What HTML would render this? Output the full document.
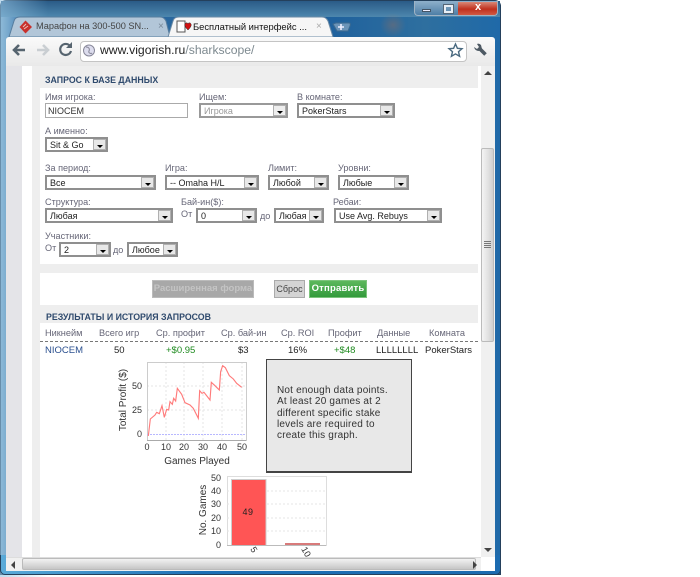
<!DOCTYPE html>
<html><head><meta charset="utf-8"><style>
html,body{margin:0;padding:0;background:#fff}
#r{position:relative;width:700px;height:577px;overflow:hidden;background:#fff;font-family:"Liberation Sans","DejaVu Sans",sans-serif;font-size:9.5px;color:#333}
#r div,#r span.a{position:absolute;box-sizing:border-box}
.l{color:#667;white-space:nowrap;font-size:9.1px;line-height:11px}
.s{background:#fff;border:2px solid #8f8f8f;height:15px;line-height:13px;padding-left:3px;color:#222;white-space:nowrap;font-size:9px;overflow:hidden}
.s i{position:absolute;right:0;top:0;width:13px;height:11px;background:#e8e8e8;border:1px solid #b0b0b0;box-sizing:border-box}
.s i:after{content:"";position:absolute;left:3px;top:5px;border:3px solid transparent;border-top:3px solid #000;border-bottom:0}
.th{color:#667;font-size:9.2px;white-space:nowrap;text-align:center;top:327px;line-height:12px}
.td{color:#222;font-size:9.5px;white-space:nowrap;text-align:center;top:345px;line-height:12px}
.h{color:#2f4a6d;font-weight:bold;font-size:8.8px;white-space:nowrap;line-height:12px}
</style></head><body><div id="r">
<div style="left:0;top:0;width:501px;height:575px;background:linear-gradient(90deg,#7da9c8 0,#2f6ea6 3%,#2a689f 35%,#1b5d9c 60%,#2e6f9f 85%,#1f69a8 100%);border-radius:6px 6px 0 0;border:1px solid #24405c"></div>
<div style="left:1px;top:1px;width:499px;height:16px;background:linear-gradient(#2a5b87,#4d87ae)"></div>
<div style="left:0;top:0;width:160px;height:577px;background:linear-gradient(90deg,rgba(150,195,225,.6),rgba(80,150,200,0) 30%)"></div>
<div style="left:380px;top:13px;width:26px;height:24px;background:radial-gradient(closest-side,rgba(190,110,70,.3),rgba(190,110,70,0))"></div>
<div style="left:0;top:555px;width:501px;height:20px;background:linear-gradient(90deg,#5aaad8,#1d6fb5 40%,#1c6bb0);border:1px solid #24405c;border-top:0;border-radius:0 0 5px 5px"></div>

<div style="left:414px;top:1px;width:84px;height:15px;border:1px solid #9fb3c4;border-top:0;border-radius:0 0 4px 4px;background:linear-gradient(#8fb0cb,#4e7ea6)"></div>
<div style="left:458px;top:2px;width:39px;height:13px;background:linear-gradient(#d98877,#c0301e 55%,#d15a44);border-radius:0 0 3px 0"></div>
<div style="left:473px;top:2px;width:10px;height:10px;color:#fff;font-size:11px;font-weight:bold;line-height:10px;text-align:center">x</div>
<div style="left:422px;top:9px;width:9px;height:3px;background:#eef;border:1px solid #456"></div>
<div style="left:444px;top:5px;width:9px;height:8px;border:2px solid #e8eef5;outline:1px solid #567"></div>

<svg style="position:absolute;left:0;top:0" width="500" height="40">
<path d="M9 37 L14 21 Q15 17 20 17 L160 17 Q164 17 166 21 L170 37Z" fill="#b2c6d8" stroke="#577d9e"/>
<path d="M168 37 L173 21 Q174 17 179 17 L322 17 Q326 17 328 21 L333 37Z" fill="#f6f6f6" stroke="#6b8aa5"/>
<path d="M333 24 L336 23 L349 23 Q351 23 350 26 L348 31 L337 31Z" fill="#6b94b8" stroke="#3d6a90"/>
<path d="M341 24v6M338 27h6" stroke="#eef" stroke-width="1.6"/>
<path d="M25.500 20.500 L32 27 L25.500 33.500 L19.500 27Z" fill="#c8302c"/>
<path d="M23 27l3-3M24 29l4-3" stroke="#eac0b8" stroke-width="1" fill="none"/>
<rect x="177" y="21" width="8" height="11" fill="#fff" stroke="#555"/>
<path d="M185 24c1-2 3-1 3 0c0-1 2-2 3 0c1 2-2 5-3 6c-1-1-4-4-3-6Z" fill="#d01010" stroke="#222" stroke-width=".5"/>
</svg>
<div class="a" style="left:36px;top:20px;font-size:9.2px;color:#444;white-space:nowrap;line-height:13px">Марафон на 300-500 SN...</div>
<div style="left:158px;top:20px;font-size:10px;color:#789;line-height:13px">×</div>
<div style="left:193px;top:20px;font-size:9.4px;color:#111;white-space:nowrap;line-height:13px">Бесплатный интерфейс ...</div>
<div style="left:316px;top:20px;font-size:10px;color:#aaa;line-height:13px">×</div>

<div style="left:6px;top:37px;width:489px;height:29px;background:linear-gradient(#fafafa,#e9e9e9);border-radius:3px 3px 0 0"></div>
<div style="left:80px;top:41px;width:387px;height:21px;background:#fff;border:1px solid #c4c4c4;border-radius:4px"></div>
<svg style="position:absolute;left:0;top:36px" width="500" height="30">
<path d="M25 14H15M19 9l-5 5 5 5" fill="none" stroke="#56646f" stroke-width="2.6"/>
<path d="M37 14h10M43 9l5 5-5 5" fill="none" stroke="#c9ced2" stroke-width="2.6"/>
<path d="M70 10a5.500 5.500 0 1 0 1 5" fill="none" stroke="#56646f" stroke-width="2.2"/>
<path d="M72 6v6h-6z" fill="#56646f"/>
<circle cx="89" cy="14.500" r="5.500" fill="#dde" stroke="#889"/>
<path d="M86 11c3 0 4 2 3 4s2 3 3 2" fill="none" stroke="#889"/>
<path d="M455.500 8l1.900 4.300 4.600.4-3.500 3 1.100 4.600-4.100-2.400-4.100 2.400 1.100-4.600-3.500-3 4.600-.4z" fill="#fff" stroke="#4a6a80" stroke-width="1.400"/>
<path d="M480 13L485.500 18.500" stroke="#4e5a64" stroke-width="3.600" fill="none"/>
<path d="M474 11 L477 13 L479 11 L477 8 Q479 7 481 9 L482 13 L479 15 Q475 15 474 11Z" fill="#4e5a64"/>
</svg>
<div style="left:100px;top:42px;font-size:12.2px;color:#222;white-space:nowrap;line-height:17px">www.vigorish.ru<span style="color:#7e8a90">/sharkscope/</span></div>

<div style="left:6px;top:66px;width:489px;height:491px;background:#fff"></div>
<div style="left:6px;top:66px;width:16px;height:491px;background:#e4e4e8"></div>
<div style="left:32px;top:66px;width:446px;height:491px;background:#eeeeee"></div>
<div style="left:40px;top:88px;width:438px;height:176px;background:#fff"></div>
<div style="left:40px;top:273px;width:438px;height:32px;background:#fff"></div>
<div style="left:40px;top:323px;width:438px;height:234px;background:#fff"></div>

<div class="h" style="left:45px;top:74px">ЗАПРОС К БАЗЕ ДАННЫХ</div>
<div class="l" style="left:45px;top:92px">Имя игрока:</div>
<div style="left:45px;top:103px;width:143px;height:15px;border:1px solid #aaa;font-size:9px;color:#333;line-height:14px;padding-left:2px">NIOCEM</div>
<div class="l" style="left:199px;top:92px">Ищем:</div>
<div class="s" style="left:199px;top:103px;width:89px;color:#999;border-color:#999">Игрока<i style="background:#eee"></i></div>
<div class="l" style="left:297px;top:92px">В комнате:</div>
<div class="s" style="left:297px;top:103px;width:98px">PokerStars<i></i></div>

<div class="l" style="left:45px;top:126px">А именно:</div>
<div class="s" style="left:45px;top:137px;width:63px">Sit &amp; Go<i></i></div>

<div class="l" style="left:45px;top:163px">За период:</div>
<div class="s" style="left:45px;top:175px;width:111px">Все<i></i></div>
<div class="l" style="left:165px;top:163px">Игра:</div>
<div class="s" style="left:165px;top:175px;width:94px">-- Omaha H/L<i></i></div>
<div class="l" style="left:268px;top:163px">Лимит:</div>
<div class="s" style="left:268px;top:175px;width:61px">Любой<i></i></div>
<div class="l" style="left:338px;top:163px">Уровни:</div>
<div class="s" style="left:338px;top:175px;width:71px">Любые<i></i></div>

<div class="l" style="left:45px;top:197px">Структура:</div>
<div class="s" style="left:45px;top:208px;width:128px">Любая<i></i></div>
<div class="l" style="left:181px;top:197px">Бай-ин($):</div>
<div class="l" style="left:181px;top:209px">От</div>
<div class="s" style="left:196px;top:208px;width:61px">0<i></i></div>
<div class="l" style="left:260px;top:211px">до</div>
<div class="s" style="left:274px;top:208px;width:50px">Любая<i></i></div>
<div class="l" style="left:333px;top:197px">Ребаи:</div>
<div class="s" style="left:334px;top:208px;width:108px">Use Avg. Rebuys<i></i></div>

<div class="l" style="left:45px;top:231px">Участники:</div>
<div class="l" style="left:45px;top:243px">От</div>
<div class="s" style="left:59px;top:242px;width:52px">2<i></i></div>
<div class="l" style="left:113px;top:245px">до</div>
<div class="s" style="left:127px;top:242px;width:51px">Любое<i></i></div>

<div style="left:152px;top:280px;width:102px;height:18px;background:#a8a8a8;border:1px solid #bbb;color:#c4c4c4;font-weight:bold;font-size:9.5px;text-align:center;line-height:16px;white-space:nowrap">Расширенная форма</div>
<div style="left:274px;top:280px;width:31px;height:18px;background:#d4d4d4;border:1px solid #aaa;color:#444;font-size:9px;text-align:center;line-height:16px">Сброс</div>
<div style="left:309px;top:280px;width:58px;height:18px;background:linear-gradient(#5cb85c,#339a3c);border:1px solid #7cc47c;color:#fff;font-weight:bold;font-size:9.5px;text-align:center;line-height:16px;white-space:nowrap;letter-spacing:.2px">Отправить</div>

<div class="h" style="left:46px;top:311px">РЕЗУЛЬТАТЫ И ИСТОРИЯ ЗАПРОСОВ</div>
<div style="left:40px;top:341px;width:438px;height:1px;border-top:1px dashed #777"></div>
<div class="th" style="left:45px">Никнейм</div>
<div class="th" style="left:99px">Всего игр</div>
<div class="th" style="left:156px">Ср. профит</div>
<div class="th" style="left:221px">Ср. бай-ин</div>
<div class="th" style="left:281px">Ср. ROI</div>
<div class="th" style="left:328px">Профит</div>
<div class="th" style="left:377px">Данные</div>
<div class="th" style="left:429px">Комната</div>
<div class="td" style="left:45px;color:#2a4f8f">NIOCEM</div>
<div class="td" style="left:114px">50</div>
<div class="td" style="left:166px;color:#1e8a1e">+$0.95</div>
<div class="td" style="left:238px">$3</div>
<div class="td" style="left:288px">16%</div>
<div class="td" style="left:334px;color:#1e8a1e">+$48</div>
<div class="td" style="left:376px">LLLLLLLL</div>
<div class="td" style="left:425px">PokerStars</div>

<svg style="position:absolute;left:0;top:0" width="500" height="577" font-family="Liberation Sans, sans-serif">
<g stroke="#e6e6e6" stroke-width="1" stroke-dasharray="2 2" fill="none">
<path d="M166 362V440M184 362V440M203 362V440M222 362V440M242 362V440M147 386H246M147 410H246"/>
</g>
<rect x="147.500" y="362.500" width="99" height="78" fill="none" stroke="#ccc"/>
<path d="M147 434.500H246" stroke="#b8b8ff" stroke-width="1" stroke-dasharray="2 1"/>
<path d="M147 440.500H246" stroke="#aaa"/>
<g transform="translate(100 355) scale(.3333)">
<polyline fill="none" stroke="#ff7a7a" stroke-width="3.400" points="145,243 151,192 165,180 170,172 178,176 186,152 193,187 200,163 206,165 210,140 217,148 221,130 227,138 232,100 245,118 255,143 270,150 280,160 295,190 299,107 306,115 312,112 330,135 334,82 345,92 358,105 362,50 368,32 376,38 388,62 400,72 410,85 425,97"/>
</g>
<g font-size="9" fill="#333" text-anchor="end">
<text x="142" y="389">50</text><text x="142" y="413">25</text><text x="142" y="437">0</text>
</g>
<g font-size="9" fill="#333" text-anchor="middle">
<text x="147" y="450">0</text><text x="166" y="450">10</text><text x="184" y="450">20</text><text x="203" y="450">30</text><text x="222" y="450">40</text><text x="242" y="450">50</text>
<text x="197" y="464" font-size="10">Games Played</text>
<text transform="translate(126 400) rotate(-90)" font-size="10">Total Profit ($)</text>
<text transform="translate(206 510) rotate(-90)" font-size="10">No. Games</text>
</g>
<rect x="227.500" y="476.500" width="99" height="69" fill="#fff" stroke="#ddd"/>
<g stroke="#e6e6e6" stroke-dasharray="2 2"><path d="M227 491H326M227 504H326M227 518H326M227 531H326"/></g>
<rect x="231.500" y="479.500" width="34.500" height="66" fill="#ff5555" stroke="#ccc"/>
<rect x="285" y="543" width="35" height="2" fill="#d87a7a"/>
<path d="M227 545.500H326" stroke="#bbb"/>
<text x="248" y="515" font-size="9" fill="#222" text-anchor="middle" letter-spacing=".5">49</text>
<g font-size="9" fill="#333" text-anchor="end">
<text x="221" y="481">50</text><text x="221" y="494">40</text><text x="221" y="507">30</text><text x="221" y="521">20</text><text x="221" y="534">10</text><text x="221" y="548">0</text>
</g>
<text transform="translate(250 549) rotate(60)" font-size="9" fill="#333">5</text>
<text transform="translate(301 549) rotate(60)" font-size="9" fill="#333">10</text>
</svg>

<div style="left:266px;top:359px;width:146px;height:114px;background:#e8e8e8;border:1px solid #444;border-bottom-width:2px"></div>
<div style="left:277px;top:385px;font-size:10px;line-height:11.3px;color:#333;white-space:nowrap;letter-spacing:.2px">Not enough data points.<br>At least 20 games at 2<br>different specific stake<br>levels are required to<br>create this graph.</div>

<div style="left:478px;top:66px;width:3px;height:491px;background:#fff"></div>
<div style="left:481px;top:66px;width:14px;height:491px;background:#f0f0f0"></div>
<div style="left:481px;top:148px;width:13px;height:194px;background:linear-gradient(90deg,#f4f4f4,#e0e0e0 60%,#cfcfcf);border:1px solid #bbb;border-radius:2px"></div>
<div style="left:484px;top:241px;width:7px;height:7px;background:repeating-linear-gradient(#777 0 1px,transparent 1px 2px)"></div>
<div style="left:484px;top:71px;width:0;height:0;border:4px solid transparent;border-bottom:4px solid #444;border-top:0"></div>
<div style="left:484px;top:548px;width:0;height:0;border:4px solid transparent;border-top:4px solid #444;border-bottom:0"></div>

<div style="left:6px;top:557px;width:475px;height:14px;background:#f0f0f0;border-top:1px solid #ddd"></div>
<div style="left:22px;top:558px;width:454px;height:12px;background:linear-gradient(#f2f2f2,#d8d8d8 60%,#c6c6c6);border:1px solid #bbb;border-radius:2px"></div>
<div style="left:11px;top:561px;width:0;height:0;border:4px solid transparent;border-right:4px solid #444;border-left:0"></div>
<div style="left:473px;top:561px;width:0;height:0;border:4px solid transparent;border-left:4px solid #444;border-right:0"></div>
<div style="left:481px;top:557px;width:14px;height:14px;background:#fff"></div>
</div></body></html>
